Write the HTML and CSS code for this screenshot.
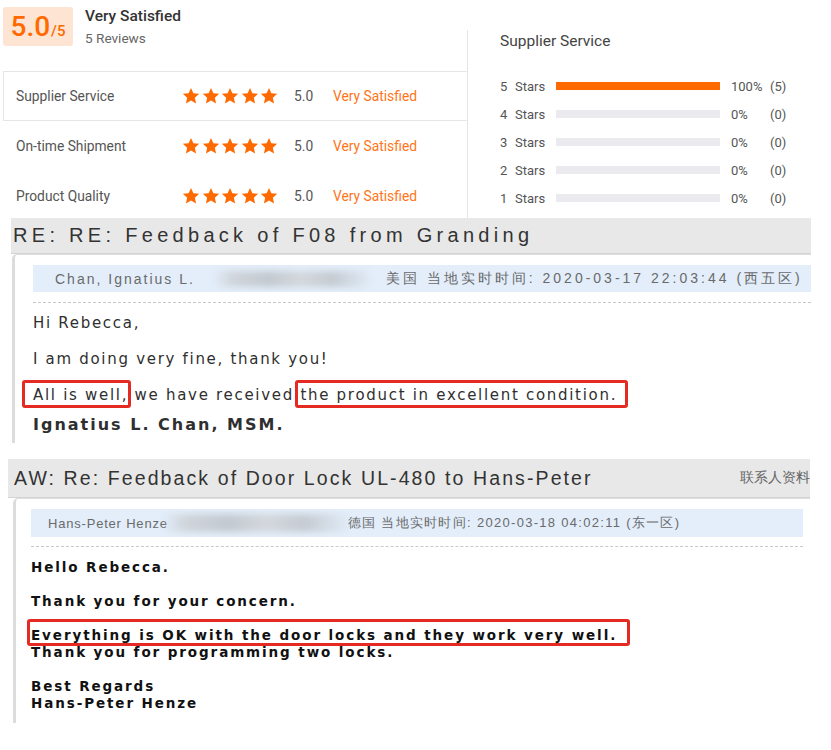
FILE: index.html
```html
<!DOCTYPE html>
<html lang="en">
<head>
<meta charset="utf-8">
<title>Reviews</title>
<link rel="stylesheet" href="styles.css">
</head>
<body>
<svg width="0" height="0" class="defs" aria-hidden="true">
  <defs>
    <symbol id="star" viewBox="0 0 24 24"><path d="M12 1.2l3.2 7.1 7.7.8-5.8 5.2 1.7 7.6L12 18l-6.8 3.9 1.7-7.6L1.1 9.1l7.7-.8z"/></symbol>
  </defs>
</svg>

<section class="summary">
  <div class="score-col">
    <div class="score-head">
      <div class="badge"><span class="big">5.0</span><span class="out">/5</span></div>
      <div class="score-text">
        <div class="sat">Very Satisfied</div>
        <div class="reviews">5 Reviews</div>
      </div>
    </div>
    <div class="row active">
      <span class="label">Supplier Service</span>
      <span class="stars"><svg><use href="#star"/></svg><svg><use href="#star"/></svg><svg><use href="#star"/></svg><svg><use href="#star"/></svg><svg><use href="#star"/></svg></span>
      <span class="num">5.0</span>
      <span class="verdict">Very Satisfied</span>
    </div>
    <div class="row">
      <span class="label">On-time Shipment</span>
      <span class="stars"><svg><use href="#star"/></svg><svg><use href="#star"/></svg><svg><use href="#star"/></svg><svg><use href="#star"/></svg><svg><use href="#star"/></svg></span>
      <span class="num">5.0</span>
      <span class="verdict">Very Satisfied</span>
    </div>
    <div class="row">
      <span class="label">Product Quality</span>
      <span class="stars"><svg><use href="#star"/></svg><svg><use href="#star"/></svg><svg><use href="#star"/></svg><svg><use href="#star"/></svg><svg><use href="#star"/></svg></span>
      <span class="num">5.0</span>
      <span class="verdict">Very Satisfied</span>
    </div>
  </div>

  <div class="dist">
    <div class="dist-title">Supplier Service</div>
    <div class="dist-row"><span class="n">5</span><span class="s">Stars</span><span class="bar"><span class="fill" style="width:100%"></span></span><span class="pct">100%</span><span class="cnt">(5)</span></div>
    <div class="dist-row"><span class="n">4</span><span class="s">Stars</span><span class="bar"><span class="fill" style="width:0%"></span></span><span class="pct">0%</span><span class="cnt">(0)</span></div>
    <div class="dist-row"><span class="n">3</span><span class="s">Stars</span><span class="bar"><span class="fill" style="width:0%"></span></span><span class="pct">0%</span><span class="cnt">(0)</span></div>
    <div class="dist-row"><span class="n">2</span><span class="s">Stars</span><span class="bar"><span class="fill" style="width:0%"></span></span><span class="pct">0%</span><span class="cnt">(0)</span></div>
    <div class="dist-row"><span class="n">1</span><span class="s">Stars</span><span class="bar"><span class="fill" style="width:0%"></span></span><span class="pct">0%</span><span class="cnt">(0)</span></div>
  </div>
</section>

<section class="mail mail1">
  <div class="mail-head"><span class="subject">RE: RE: Feedback of F08 from Granding</span></div>
  <div class="card">
    <div class="sender">
      <span class="who">Chan, Ignatius L.</span>
      <span class="blob"></span>
      <span class="when">美国 当地实时时间: 2020-03-17 22:03:44 (西五区)</span>
    </div>
    <div class="dash"></div>
    <div class="body">
      <p>Hi Rebecca,</p>
      <p>I am doing very fine, thank you!</p>
      <p><span class="mark m1">All is well,</span> we have received <span class="mark m2">the product in excellent condition.</span></p>
      <p class="sign">Ignatius L. Chan, MSM.</p>
    </div>
  </div>
</section>

<section class="mail mail2">
  <div class="mail-head"><span class="subject">AW: Re: Feedback of Door Lock UL-480 to Hans-Peter</span><span class="contact">联系人资料</span></div>
  <div class="card">
    <div class="sender">
      <span class="who">Hans-Peter Henze</span>
      <span class="blob"></span>
      <span class="when">德国 当地实时时间: 2020-03-18 04:02:11 (东一区)</span>
    </div>
    <div class="dash"></div>
    <div class="body">
      <p>Hello Rebecca.</p>
      <p>&nbsp;</p>
      <p>Thank you for your concern.</p>
      <p>&nbsp;</p>
      <p><span class="mark m3">Everything is OK with the door locks and they work very well.</span></p>
      <p>Thank you for programming two locks.</p>
      <p>&nbsp;</p>
      <p>Best Regards</p>
      <p>Hans-Peter Henze</p>
    </div>
  </div>
</section>
</body>
</html>
```

FILE: styles.css
```css
* { box-sizing: border-box; }
html, body { margin: 0; padding: 0; }
body {
  width: 831px;
  height: 750px;
  overflow: hidden;
  background: #fff;
  font-family: Roboto, "Noto Sans", sans-serif;
  color: #333;
}
.defs { position: absolute; width: 0; height: 0; }

/* ---------- summary ---------- */
.summary { display: flex; height: 218px; }

.score-col {
  width: 468px;
  margin-top: 30px;
  height: 188px;
  border-right: 1px solid #e6e6e6;
}
.score-head {
  margin-top: -30px;
  height: 71px;
  display: flex;
  align-items: flex-start;
}
.badge {
  margin: 7px 0 0 3px;
  width: 70px;
  height: 39px;
  background: #fee4d3;
  border-radius: 3px;
  text-align: center;
  line-height: 39px;
  color: #ff6a00;
  white-space: nowrap;
}
.badge .big { font-size: 28px; font-weight: 500; }
.badge .out { font-size: 15px; font-weight: 500; margin-left: 1px; }
.score-text { margin: 6px 0 0 12px; }
.sat { font-size: 15.5px; font-weight: 500; line-height: 21px; color: #333; }
.reviews { font-size: 13.6px; line-height: 18px; margin-top: 2px; color: #666; }

.row {
  height: 50px;
  margin-left: 3px;
  padding-left: 12px;
  display: flex;
  align-items: center;
  border: 1px solid transparent;
  border-right: none;
  font-size: 13.8px;
}
.row.active { border-color: #e6e6e6; }
.row .label { width: 166px; color: #555; }
.stars { display: flex; gap: 1.5px; }
.stars svg { width: 18px; height: 18px; fill: #ff6a00; display: block; }
.row .num { margin-left: 16px; color: #555; width: 20px; }
.row .verdict { margin-left: 19px; color: #ff7418; }

.dist { margin-left: 32px; padding-top: 31px; }
.dist-title { font-size: 15.5px; line-height: 20px; color: #444; }
.dist-row {
  display: flex;
  align-items: center;
  height: 28px;
  font-size: 13px;
  color: #555;
}
.dist-title + .dist-row { margin-top: 21px; }
.dist-row .n { width: 15px; }
.dist-row .s { width: 41px; }
.dist-row .bar { width: 164px; height: 8px; background: #ebebef; display: block; }
.dist-row .fill { display: block; height: 100%; background: #ff6a00; }
.dist-row .pct { margin-left: 11px; width: 39px; }

/* ---------- mails ---------- */
.mail { font-family: "Liberation Sans", Arial, sans-serif; }
.mail-head {
  display: flex;
  align-items: center;
  background: #e8e8e8;
  border-bottom: 1px solid #d3d3d3;
  overflow: hidden;
  white-space: nowrap;
}
.mail .subject { color: #333; }
.card {
  border-left: 3px solid #dcdcdc;
  border-top: 1px solid #dedede;
  border-top-left-radius: 5px;
}
.sender {
  display: flex;
  align-items: center;
  background: #e3eefa;
  color: #6a6a6a;
  white-space: nowrap;
  overflow: hidden;
}
.blob {
  display: block;
  height: 16px;
  background: linear-gradient(90deg, rgba(200,206,213,0) 0%, #d0d5db 12%, #c3c9d0 35%, #d4d8dd 55%, #c5cbd2 75%, rgba(205,210,216,0) 100%);
  filter: blur(3px);
  border-radius: 8px;
}
.dash { border-top: 1px dashed #c9c9c9; }
.body p { margin: 0; white-space: nowrap; }
.mark {
  border: 3px solid #e42a22;
  border-radius: 3px;
}

/* mail 1 */
.mail1 { margin-left: 11px; width: 800px; }
.mail1 .mail-head { height: 36px; }
.mail1 .subject { font-size: 20px; letter-spacing: 4.3px; padding-left: 2px; }
.mail1 .card { margin-left: 1px; height: 189px; padding: 10px 0 0 18px; }
.mail1 .sender { height: 27px; padding-left: 22px; font-size: 14px; letter-spacing: 2px; }
.mail1 .blob { width: 160px; margin-left: 18px; }
.mail1 .when { margin-left: 13px; letter-spacing: 3px; }
.mail1 .dash { margin-top: 10px; }
.mail1 .body {
  padding-top: 2px;
  font-family: "DejaVu Sans", Verdana, sans-serif;
  font-size: 15px;
  letter-spacing: 1.7px;
  color: #2f2f2f;
}
.mail1 .body p { line-height: 36px; }
.mail1 .body p.sign { line-height: 24px; font-weight: bold; font-size: 16px; letter-spacing: 2px; }
.m1 { padding: 3px 0 1px 8px; margin-left: -11px; margin-right: -3px; }
.m2 { padding: 3px 8px 1px 2px; margin-left: -5px; margin-right: -11px; }

/* mail 2 */
.mail2 { margin-top: 16px; margin-left: 8px; width: 802px; }
.mail2 .mail-head { height: 39px; padding-left: 6px; }
.mail2 .subject { font-size: 19.5px; letter-spacing: 2.1px; }
.mail2 .contact { margin-left: auto; margin-right: 0; font-size: 13.5px; color: #666; flex-shrink: 0; }
.mail2 .card { margin-left: 5px; height: 225px; padding: 10px 7px 0 15px; }
.mail2 .sender { height: 28px; padding-left: 17px; font-size: 13px; letter-spacing: 0.8px; }
.mail2 .blob { width: 190px; margin-left: -6px; height: 18px; }
.mail2 .when { margin-left: -4px; letter-spacing: 1.3px; }
.mail2 .dash { margin-top: 9px; }
.mail2 .body {
  padding-top: 12px;
  font-family: "DejaVu Sans", Verdana, sans-serif;
  font-weight: bold;
  font-size: 13.5px;
  letter-spacing: 1.9px;
  color: #111;
}
.mail2 .body p { line-height: 17px; }
.m3 { padding: 5px 10px 0 1px; margin-left: -4px; margin-right: -13px; }
```
